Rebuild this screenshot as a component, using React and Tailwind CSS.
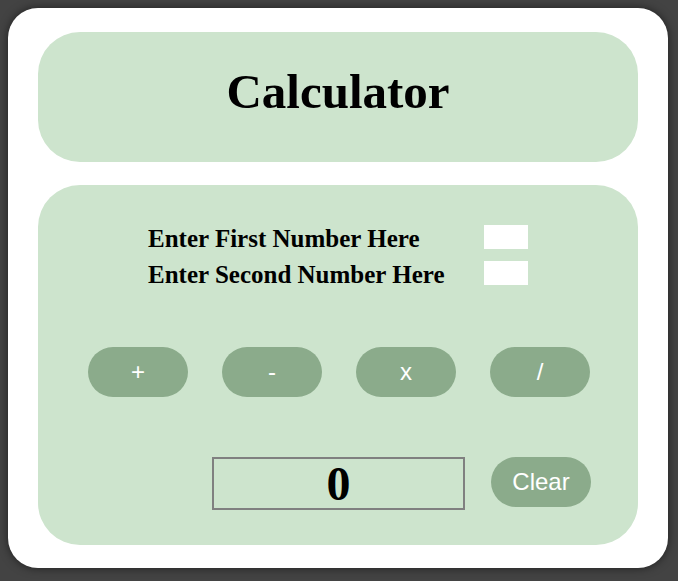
import React, { useState } from 'react';

const serif = { fontFamily: '"Liberation Serif", "Times New Roman", serif' };

const OpButton = ({ label, onClick }) => (
    <button
        onClick={onClick}
        className="w-[100px] h-[50px] rounded-full bg-[#8bab8b] text-white text-[24px] leading-none flex items-center justify-center font-['Liberation_Sans',Arial,sans-serif]"
    >
        {label}
    </button>
);

export default function App() {
    const [a, setA] = useState('');
    const [b, setB] = useState('');
    const [result, setResult] = useState(0);

    const calc = op => {
        const x = parseFloat(a) || 0;
        const y = parseFloat(b) || 0;
        if (op === '+') setResult(x + y);
        if (op === '-') setResult(x - y);
        if (op === 'x') setResult(x * y);
        if (op === '/') setResult(y === 0 ? 0 : x / y);
    };

    return (
        <div className="min-h-screen bg-[#434343] p-2">
            <div className="w-[660px] h-[560px] bg-white rounded-[30px] px-[30px] pt-[24px] shadow-[0_0_10px_rgba(0,0,0,0.55)]">
                <div className="h-[130px] rounded-[42px] bg-[#cde4cd] flex items-center justify-center pb-3">
                    <h1 className="text-[49px] leading-none font-bold text-black" style={serif}>Calculator</h1>
                </div>

                <div className="mt-[23px] h-[360px] rounded-[42px] bg-[#cde4cd] pt-[34px]">
                    <div className="pl-[110px] text-[25px] font-bold leading-[36px] text-black" style={serif}>
                        <div className="flex items-center h-[36px]">
                            <span className="w-[336px] mt-[4px]">Enter First Number Here</span>
                            <input
                                value={a}
                                onChange={e => setA(e.target.value)}
                                className="w-[44px] h-[24px] bg-white outline-none text-[14px]"
                            />
                        </div>
                        <div className="flex items-center h-[36px]">
                            <span className="w-[336px] mt-[4px]">Enter Second Number Here</span>
                            <input
                                value={b}
                                onChange={e => setB(e.target.value)}
                                className="w-[44px] h-[24px] bg-white outline-none text-[14px]"
                            />
                        </div>
                    </div>

                    <div className="mt-[56px] flex justify-center gap-[34px] pl-[2px]">
                        {['+', '-', 'x', '/'].map(op => (
                            <OpButton key={op} label={op} onClick={() => calc(op)} />
                        ))}
                    </div>

                    <div className="mt-[60px] flex items-start pl-[174px] gap-[26px]">
                        <div
                            className="w-[253px] h-[53px] border-2 border-[#808080] flex items-center justify-center text-[48px] font-bold leading-none text-black"
                            style={serif}
                        >
                            {result}
                        </div>
                        <button
                            onClick={() => { setA(''); setB(''); setResult(0); }}
                            className="w-[100px] h-[50px] rounded-full bg-[#8bab8b] text-white text-[24px] leading-none flex items-center justify-center font-['Liberation_Sans',Arial,sans-serif]"
                        >
                            Clear
                        </button>
                    </div>
                </div>
            </div>
        </div>
    );
}
